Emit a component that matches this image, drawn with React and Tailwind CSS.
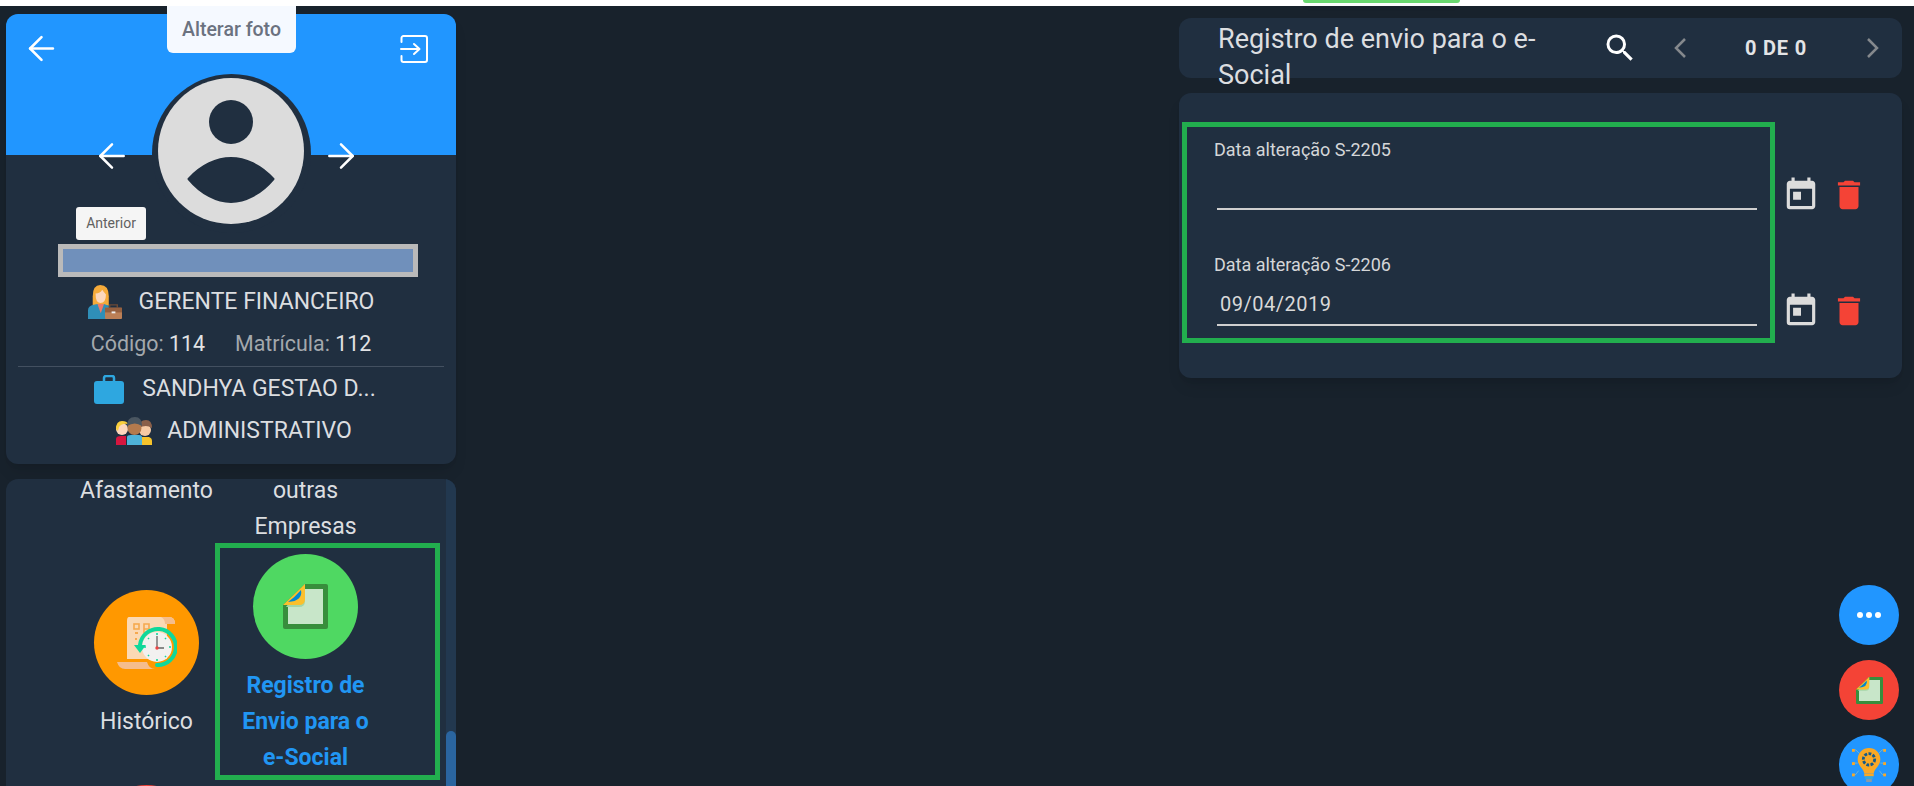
import React from "react";
import { ArrowLeft, ArrowRight } from "lucide-react";
import { MdToday, MdDelete, MdSearch } from "react-icons/md";

function EsocialIcon({ className }) {
  return (
    <svg viewBox="0 0 45 45" className={className}>
      <path d="M22 0H43a2 2 0 0 1 2 2V43a2 2 0 0 1-2 2H2a2 2 0 0 1-2-2V21Z" fill="#388e3c" />
      <path d="M22 5H40V40H5V21Z" fill="#c8e6c9" />
      <path d="M22 0V17Q22 23 16 23H3Z" fill="#a5d6a7" />
      <path d="M22 0V15Q22 21 16 21H0Z" fill="#fbc02d" />
      <path d="M18 6Q20 17 5 18Q12 13 18 6Z" fill="#0288d1" />
    </svg>
  );
}

function HistoryIcon({ className }) {
  return (
    <svg viewBox="0 0 60 56" className={className}>
      <path d="M12 2H52Q58 2 58 9H50V44H10V6Q10 2 12 2Z" fill="#fbd9b4" />
      <path d="M44 2H52Q58 2 58 9H48Q48 4 44 2Z" fill="#f5bd8c" />
      <rect x="17" y="9" width="5" height="5" fill="none" stroke="#f5a94f" strokeWidth="1.6" />
      <path d="M27 9h5v5h-5zM27 9v9" fill="none" stroke="#f5a94f" strokeWidth="1.6" />
      <path d="M18 18h3M18 24h2" stroke="#f5a94f" strokeWidth="2" />
      <path d="M0 47H30Q32 54 38 54H8Q2 54 0 47Z" fill="#f5bd8c" />
      <circle cx="40" cy="32" r="15" fill="#f2f1f0" />
      <path d="M23 30A18 18 0 1 1 40 50" fill="none" stroke="#0fd89a" strokeWidth="4" strokeLinecap="round" />
      <path d="M17 30H29L23 38Z" fill="#0fd89a" />
      <path d="M40 21V33H47" fill="none" stroke="#666" strokeWidth="1.3" />
      <circle cx="40" cy="33" r="1.7" fill="#ef4444" />
      <path d="M40 18v2M40 44v2M27 32h2M52 32h2M31 23l1 1M48 41l1 1M31 41l1-1M48 23l1 1" stroke="#0fd89a" strokeWidth="1.6" />
    </svg>
  );
}

function WomanIcon({ className }) {
  return (
    <svg viewBox="0 0 36 36" className={className}>
      <path d="M5 12Q5 0 13 0Q22 0 22 12V22H5Z" fill="#f6ab3a" />
      <path d="M8 9Q13 9 15 5Q18 9 19 10Q19 19 13 19Q8 19 8 9Z" fill="#fcd7bd" />
      <path d="M0 36V27Q0 22 6 21L10 20H17L22 22V36Z" fill="#2f8fb8" />
      <path d="M10 20H17L13.500 30Z" fill="#ee7a68" />
      <rect x="18" y="24" width="18" height="12" rx="1" fill="#bb7f56" />
      <path d="M23 24V21H31V24" fill="none" stroke="#6b4a36" strokeWidth="1.500" />
      <rect x="18" y="24" width="18" height="5" fill="#96603f" />
      <rect x="25" y="28" width="4" height="2" fill="#eee" />
    </svg>
  );
}

function TeamIcon({ className }) {
  return (
    <svg viewBox="0 0 36 28" className={className}>
      <path d="M0 28V22Q0 19 5 19H10V28Z" fill="#d6163f" />
      <circle cx="6" cy="12" r="6" fill="#fcd7bd" />
      <path d="M0 12Q0 4 6 4Q11 4 12 7Q6 6 3 10L2 14Z" fill="#f9cf3d" />
      <path d="M26 28V20H33Q36 21 36 24V28Z" fill="#f6c32b" />
      <circle cx="29" cy="13" r="6" fill="#f6c9a4" />
      <path d="M23 11Q23 3 30 3Q36 3 36 11Q30 7 23 11Z" fill="#8a5f49" />
      <path d="M11 28V20Q11 18 15 18H23Q26 18 26 20V28Z" fill="#4fb3d9" />
      <circle cx="18.500" cy="11" r="7" fill="#b47a4d" />
      <path d="M11 9Q11 0 19 0Q26 0 26 9Q19 4 11 9Z" fill="#4a5661" />
    </svg>
  );
}

function BulbIcon({ className }) {
  return (
    <svg viewBox="0 0 36 40" className={className}>
      <path d="M8 8L4 4H1M28 8L32 4H35M6 18H1M30 18H35M7 26L4 30H1M29 26L32 30H35" fill="none" stroke="#6cb5d8" strokeWidth="1" />
      <g fill="#f5a82a">
        <rect x="0" y="3" width="3" height="3" /><rect x="33" y="3" width="3" height="3" />
        <rect x="0" y="17" width="3" height="3" /><rect x="33" y="17" width="3" height="3" />
        <rect x="0" y="29" width="3" height="3" /><rect x="33" y="29" width="3" height="3" />
      </g>
      <path d="M18 2A12 12 0 0 1 30 14C30 21 24 23 23 29H13C12 23 6 21 6 14A12 12 0 0 1 18 2Z" fill="#f9a825" />
      <circle cx="18" cy="14" r="6" fill="#f9a825" stroke="#155a8a" strokeWidth="3" strokeDasharray="3 1.500" />
      <rect x="13" y="29" width="10" height="3" fill="#f9a825" />
      <rect x="14" y="32" width="8" height="3" fill="#38a8d8" />
      <rect x="15" y="35" width="6" height="3" fill="#8a9aa8" />
    </svg>
  );
}

function ExitIcon({ className }) {
  return (
    <svg viewBox="0 0 28 28" fill="none" stroke="white" strokeWidth="2" strokeLinecap="round" strokeLinejoin="round" className={className}>
      <path d="M1.500 7V3a2 2 0 0 1 2-2H25a2 2 0 0 1 2 2V25a2 2 0 0 1-2 2H3.500a2 2 0 0 1-2-2V21" />
      <path d="M1 14H19M14 9L19.500 14L14 19" />
    </svg>
  );
}

function Chevron({ dir, className }) {
  return (
    <svg viewBox="0 0 14 20" fill="none" stroke="#85898d" strokeWidth="2.500" className={className}>
      <path d={dir === "left" ? "M12 1L3 10L12 19" : "M2 1L11 10L2 19"} />
    </svg>
  );
}

function DateField({ label, value, spacing, height }) {
  return (
    <div className={"pl-[30px] pr-[13px] " + spacing}>
      <div className="text-[18px] leading-[20px] text-[#d4d6d8] -ml-[3px]">{label}</div>
      <div className={"pt-[17px] pl-[3px] border-b-2 border-[#cfcfcf] text-[20px] leading-[24px] text-[#d9d9d9] tracking-[0.5px] " + height}>
        {value}
      </div>
    </div>
  );
}

function Actions() {
  return (
    <div className="h-[38px] flex items-center gap-[10px]">
      <MdToday className="w-[38px] h-[38px] text-[#dcdcdc]" />
      <MdDelete className="w-[38px] h-[38px] text-[#f44336]" />
    </div>
  );
}

export default function App() {
  return (
    <div className="h-[786px] overflow-hidden bg-[#18222c] font-['Roboto',sans-serif] relative">
      <div className="h-[6px] bg-white flex justify-end pr-[454px]">
        <div className="w-[157px] h-[3px] bg-[#69d86f] rounded-b-lg shadow-md" />
      </div>

      <div className="flex justify-between items-start">
        {/* left column */}
        <div className="w-[450px] ml-[6px] mt-[8px] flex flex-col gap-[15px]">
          <div className="h-[450px] rounded-xl bg-[#202f40] overflow-hidden relative flex flex-col items-center text-[#dcdee0] shadow-lg">
            <div className="w-full h-[141px] bg-[#2196ff] flex justify-between items-start pl-[16px] pr-[28px] pt-[15px] shrink-0">
              <ArrowLeft className="w-[39px] h-[39px] text-white" strokeWidth={1.6} />
              <ExitIcon className="w-[28px] h-[28px] mt-[6px]" />
            </div>
            <div className="-mt-[81px] flex items-center gap-[20px] h-[159px] shrink-0">
              <ArrowLeft className="w-[40px] h-[40px] text-white mt-[5px]" strokeWidth={1.5} />
              <div className="w-[159px] h-[159px] rounded-full bg-[#202f40] flex justify-center pt-[4px]">
                <div className="w-[146px] h-[146px] rounded-full bg-[#dcdcdc] flex flex-col items-center pt-[22px]">
                  <div className="w-[44px] h-[44px] rounded-full bg-[#202f40]" />
                  <svg viewBox="0 0 88 46" className="w-[88px] h-[46px] mt-[13px]">
                    <path d="M1.500 22C14 8 30 1 44 1C58 1 74 8 86.500 22C74 37 58 45 44 45C30 45 14 37 1.500 22Z" fill="#202f40" stroke="#202f40" strokeWidth="2" strokeLinejoin="round" />
                  </svg>
                </div>
              </div>
              <ArrowRight className="w-[40px] h-[40px] text-white mt-[5px] -ml-[10px] mr-[10px]" strokeWidth={1.5} />
            </div>
            <div className="w-[360px] h-[33px] mt-[11px] ml-[14px] border-[5px] border-[#bababa] bg-[#7090bb] shrink-0" />
            <div className="h-[40px] mt-[5px] flex items-center gap-[17px] text-[23px]">
              <WomanIcon className="w-[34px] h-[36px]" />
              <span>GERENTE FINANCEIRO</span>
            </div>
            <div className="h-[34px] mt-[5px] flex items-center gap-[30px] text-[21.400px]">
              <span className="text-[#a3a8ad]">Código: <span className="text-[#e2e3e5]">114</span></span>
              <span className="text-[#a3a8ad]">Matrícula: <span className="text-[#e2e3e5]">112</span></span>
            </div>
            <div className="w-[426px] h-px bg-[#435060] mt-[5px]" />
            <div className="h-[40px] mt-[2px] flex items-center gap-[18px] text-[23px] ml-[8px]">
              <svg viewBox="0 0 30 29" className="w-[30px] h-[29px]">
                <path d="M10 7V3a2 2 0 0 1 2-2h6a2 2 0 0 1 2 2v4" fill="none" stroke="#2ea7e0" strokeWidth="2.500" />
                <rect x="0" y="6" width="30" height="23" rx="3" fill="#2ea7e0" />
              </svg>
              <span>SANDHYA GESTAO D...</span>
            </div>
            <div className="h-[40px] mt-[2px] flex items-center gap-[15px] text-[23px] ml-[6px]">
              <TeamIcon className="w-[36px] h-[28px]" />
              <span>ADMINISTRATIVO</span>
            </div>
            <div className="absolute left-[70px] top-[193px] w-[70px] h-[33px] bg-[#f5f5f5] rounded-[3px] flex items-center justify-center text-[14px] text-[#616161]">
              Anterior
            </div>
          </div>

          <div className="h-[320px] rounded-xl bg-[#202f40] overflow-hidden relative flex">
            <div className="w-[440px] relative text-[23px] leading-[36px] text-[#dcdee0] text-center grid grid-cols-[280px_1fr] h-full">
              <div className="flex flex-col items-center w-[159px] ml-[61px]">
                <div className="leading-[24px]">Afastamento</div>
                <div className="w-[105px] h-[105px] rounded-full bg-[#ff9800] mt-[87px] flex items-center justify-center shrink-0">
                  <HistoryIcon className="w-[60px] h-[56px]" />
                </div>
                <div className="mt-[9px]">Histórico</div>
                <div className="w-[105px] h-[105px] rounded-full bg-[#f44336] mt-[45px] shrink-0" />
              </div>
              <div className="flex flex-col items-center w-[159px] -ml-[54px] -translate-x-[6px]">
                <div className="leading-[24px]">outras</div>
                <div className="mt-[6px]">Empresas</div>
                <div className="w-[105px] h-[105px] rounded-full bg-[#4fd862] mt-[9px] flex items-center justify-center shrink-0">
                  <EsocialIcon className="w-[45px] h-[45px]" />
                </div>
                <div className="mt-[9px] font-bold text-[#2196f3]">Registro de<br />Envio para o<br />e-Social</div>
              </div>
              <div className="absolute left-[209px] top-[64px] w-[225px] h-[237px] border-[5px] border-[#22ae4e]" />
            </div>
            <div className="w-[10px] bg-[#22384f] flex flex-col justify-end">
              <div className="h-[68px] bg-[#2a659f] rounded-t-lg" />
            </div>
          </div>
        </div>

        {/* right column */}
        <div className="w-[723px] mr-[12px] mt-[12px] flex flex-col gap-[15px]">
          <div className="h-[60px] rounded-xl bg-[#202f40] flex items-center pl-[39px] relative text-[#dcdee0]">
            <div className="w-[350px] text-[27px] leading-[36px] h-[72px] mt-[18px] shrink-0">Registro de envio para o e-Social</div>
            <MdSearch className="w-[36px] h-[36px] text-white ml-[34px] shrink-0" />
            <Chevron dir="left" className="w-[14px] h-[20px] ml-[35px] shrink-0" />
            <span className="w-[150px] text-center text-[20px] font-bold text-[#e3e4e6] tracking-[0.8px] ml-[14px]">0 DE 0</span>
            <Chevron dir="right" className="w-[14px] h-[20px] ml-[15px] shrink-0" />
          </div>

          <div className="h-[285px] rounded-xl bg-[#202f40] pt-[29px] pl-[3px] flex shadow-lg">
            <div className="w-[593px] h-[221px] border-[5px] border-[#22ae4e] shrink-0">
              <DateField label="Data alteração S-2205" value="" spacing="pt-[13px]" height="h-[50px]" />
              <DateField label="Data alteração S-2206" value="09/04/2019" spacing="mt-[45px]" height="h-[51px]" />
            </div>
            <div className="ml-[7px] pt-[54px] flex flex-col gap-[78px]">
              <Actions />
              <Actions />
            </div>
          </div>
        </div>
      </div>

      {/* floating items */}
      <div className="absolute left-[167px] top-[6px] w-[129px] h-[47px] bg-[#f5f9ff] rounded-b-md flex items-center justify-center text-[19.500px] font-medium text-[#6b7280]">
        Alterar foto
      </div>
      <div className="absolute left-[1839px] top-[585px] flex flex-col gap-[15px]">
        <div className="w-[60px] h-[60px] rounded-full bg-[#2196ff] flex items-center justify-center gap-[3px]">
          <span className="w-[6px] h-[6px] rounded-full bg-white" />
          <span className="w-[6px] h-[6px] rounded-full bg-white" />
          <span className="w-[6px] h-[6px] rounded-full bg-white" />
        </div>
        <div className="w-[60px] h-[60px] rounded-full bg-[#f44336] flex items-center justify-center">
          <EsocialIcon className="w-[27px] h-[27px]" />
        </div>
        <div className="w-[60px] h-[60px] rounded-full bg-[#2196ff] flex items-center justify-center">
          <BulbIcon className="w-[34px] h-[38px]" />
        </div>
      </div>
    </div>
  );
}
